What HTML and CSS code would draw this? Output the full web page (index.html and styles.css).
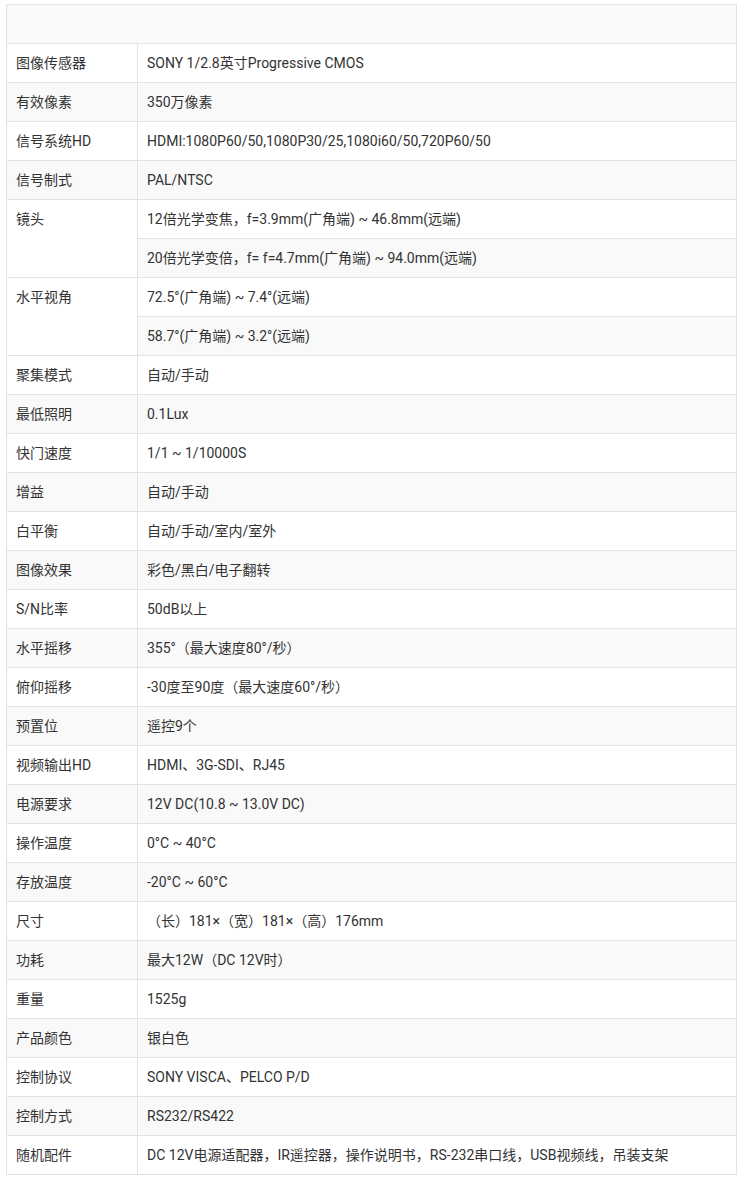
FILE: index.html
```html
<!DOCTYPE html>
<html lang="zh-CN">
<head>
<meta charset="utf-8">
<title>参数</title>
<link rel="stylesheet" href="styles.css">
</head>
<body>
<table class="spec">
  <colgroup><col class="c-name"><col class="c-val"></colgroup>
  <thead><tr><th colspan="2"></th></tr></thead>
  <tbody>
    <tr><td>图像传感器</td><td>SONY 1/2.8英寸Progressive CMOS</td></tr>
    <tr><td>有效像素</td><td>350万像素</td></tr>
    <tr><td>信号系统HD</td><td>HDMI:1080P60/50,1080P30/25,1080i60/50,720P60/50</td></tr>
    <tr><td>信号制式</td><td>PAL/NTSC</td></tr>
    <tr><td rowspan="2">镜头</td><td>12倍光学变焦，f=3.9mm(广角端) ~ 46.8mm(远端)</td></tr>
    <tr><td>20倍光学变倍，f= f=4.7mm(广角端) ~ 94.0mm(远端)</td></tr>
    <tr><td rowspan="2">水平视角</td><td>72.5°(广角端) ~ 7.4°(远端)</td></tr>
    <tr><td>58.7°(广角端) ~ 3.2°(远端)</td></tr>
    <tr><td>聚集模式</td><td>自动/手动</td></tr>
    <tr><td>最低照明</td><td>0.1Lux</td></tr>
    <tr><td>快门速度</td><td>1/1 ~ 1/10000S</td></tr>
    <tr><td>增益</td><td>自动/手动</td></tr>
    <tr><td>白平衡</td><td>自动/手动/室内/室外</td></tr>
    <tr><td>图像效果</td><td>彩色/黑白/电子翻转</td></tr>
    <tr><td>S/N比率</td><td>50dB以上</td></tr>
    <tr><td>水平摇移</td><td>355°（最大速度80°/秒）</td></tr>
    <tr><td>俯仰摇移</td><td>-30度至90度（最大速度60°/秒）</td></tr>
    <tr><td>预置位</td><td>遥控9个</td></tr>
    <tr><td>视频输出HD</td><td>HDMI、3G-SDI、RJ45</td></tr>
    <tr><td>电源要求</td><td>12V DC(10.8 ~ 13.0V DC)</td></tr>
    <tr><td>操作温度</td><td>0°C ~ 40°C</td></tr>
    <tr><td>存放温度</td><td>-20°C ~ 60°C</td></tr>
    <tr><td>尺寸</td><td>（长）181×（宽）181×（高）176mm</td></tr>
    <tr><td>功耗</td><td>最大12W（DC 12V时）</td></tr>
    <tr><td>重量</td><td>1525g</td></tr>
    <tr><td>产品颜色</td><td>银白色</td></tr>
    <tr><td>控制协议</td><td>SONY VISCA、PELCO P/D</td></tr>
    <tr><td>控制方式</td><td>RS232/RS422</td></tr>
    <tr><td>随机配件</td><td>DC 12V电源适配器，IR遥控器，操作说明书，RS-232串口线，USB视频线，吊装支架</td></tr>
  </tbody>
</table>
</body>
</html>
```

FILE: styles.css
```css
html, body {
  margin: 0;
  padding: 0;
  background: #fff;
}
body {
  padding: 4px 6px;
  font-family: "Roboto", "Noto Sans CJK SC", sans-serif;
  font-size: 14px;
  color: #333;
}
.spec {
  width: 731px;
  border-collapse: collapse;
  border: 1px solid #e3e3e3;
  table-layout: fixed;
}
.c-name { width: 131px; }
.spec th, .spec td {
  border: 1px solid #e3e3e3;
  padding: 9px 9px;
  line-height: 20px;
  height: 20px;
  text-align: left;
  vertical-align: top;
  font-weight: normal;
  white-space: nowrap;
}
.spec thead th {
  background: #f9f9f9;
}
.spec tbody tr:nth-child(even) td {
  background: #f9f9f9;
}
```
